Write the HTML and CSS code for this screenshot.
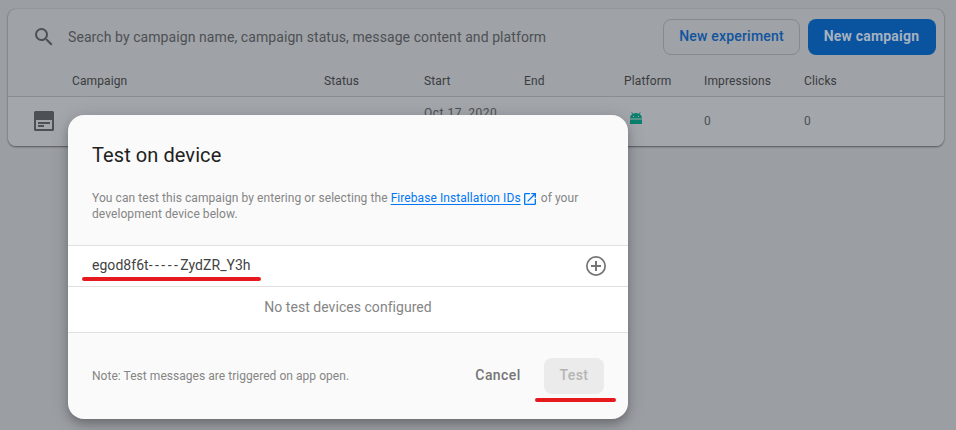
FILE: index.html
```html
<!DOCTYPE html>
<html lang="en">
<head>
<meta charset="utf-8">
<title>Test on device</title>
<link rel="stylesheet" href="styles.css">
</head>
<body>
<main class="card">
  <div class="toolbar">
    <svg class="search-icon" viewBox="0 0 24 24"><path d="M15.5 14h-.79l-.28-.27A6.47 6.47 0 0 0 16 9.5 6.5 6.5 0 1 0 9.5 16c1.61 0 3.09-.59 4.23-1.57l.27.28v.79l5 4.99L20.49 19l-4.99-5zm-6 0C7.01 14 5 11.99 5 9.5S7.01 5 9.5 5 14 7.01 14 9.5 11.99 14 9.5 14z"/></svg>
    <span class="search-text">Search by campaign name, campaign status, message content and platform</span>
    <button class="btn experiment"><span>New experiment</span></button>
    <button class="btn campaign"><span>New campaign</span></button>
  </div>
  <div class="row head">
    <span></span><span>Campaign</span><span>Status</span><span>Start</span><span>End</span><span>Platform</span><span>Impressions</span><span>Clicks</span>
  </div>
  <div class="row data">
    <svg class="message-icon" viewBox="0 0 20 20"><path fill-rule="evenodd" d="M1.5 0h17A1.5 1.5 0 0 1 20 1.500v17a1.500 1.500 0 0 1-1.500 1.500h-17A1.500 1.500 0 0 1 0 18.500v-17A1.500 1.500 0 0 1 1.500 0zM2 9v9h16V9zM4 11h12v2H4zM4 14h6v2H4z"/></svg>
    <span></span><span></span><span class="date">Oct 17, 2020</span><span></span>
    <svg class="android" viewBox="0 0 12 12"><path fill-rule="evenodd" d="M0 6.500C0 4.500 1 3 2.500 2.100L1.300.4 1.900 0l1.300 1.700a6.500 6.500 0 0 1 5.600 0L10.100 0l.6.4-1.200 1.700C11 3 12 4.500 12 6.500zM3 4v1h1V4zM8 4v1h1V4zM0 7.500h12V12H0z"/></svg>
    <span>0</span><span>0</span>
  </div>
</main>
<section class="dialog" role="dialog">
  <header class="intro">
    <h1>Test on device</h1>
    <p>You can test this campaign by entering or selecting the <a href="#">Firebase Installation IDs</a><svg class="open-icon" viewBox="0 0 18 18"><path d="M16 16H2V2h7V0H2a2 2 0 0 0-2 2v14a2 2 0 0 0 2 2h14a2 2 0 0 0 2-2V9h-2zM11 0v2h3.590l-9.830 9.830 1.410 1.410L16 3.410V7h2V0z"/></svg> of your<br>development device below.</p>
  </header>
  <div class="token-row">
    <span class="token">egod8f6t<span class="dashes">-----</span>ZydZR_Y3h<i class="mark token-mark"></i></span>
    <svg class="add-icon" viewBox="0 0 20 20"><path d="M11 5H9v4H5v2h4v4h2v-4h4V9h-4zM10 0a10 10 0 1 0 0 20 10 10 0 0 0 0-20zm0 18.300a8.300 8.300 0 1 1 0-16.600 8.300 8.300 0 0 1 0 16.600z"/></svg>
  </div>
  <div class="empty"><span>No test devices configured</span></div>
  <footer>
    <span class="note">Note: Test messages are triggered on app open.</span>
    <button class="btn cancel"><span>Cancel</span></button>
    <button class="btn test"><span>Test</span><i class="mark test-mark"></i></button>
  </footer>
</section>
</body>
</html>
```
FILE: styles.css
```css
* { box-sizing: border-box; }
body {
  margin: 0;
  height: 430px;
  padding: 9px 12px 0 8px;
  overflow: hidden;
  background: #9b9ea3;
  font-family: Roboto, "Liberation Sans", sans-serif;
  color: #4d5054;
}
svg { display: block; fill: currentColor; }
.card {
  height: 137px;
  border-radius: 8px;
  background: #9fa2a6;
  box-shadow: 0 1px 2px rgba(0, 0, 0, .45), 0 0 1px rgba(0, 0, 0, .25);
  overflow: hidden;
}
.toolbar {
  height: 56px;
  display: flex;
  align-items: center;
  padding: 0 8px 0 24px;
}
.search-icon { width: 24px; height: 24px; color: #4c4f53; }
.search-text {
  margin-left: 12px;
  flex: 1;
  font-size: 14px;
  line-height: 20px;
  letter-spacing: .08px;
  white-space: nowrap;
}
.btn {
  height: 36px;
  padding: 0 0 2px;
  border: 0;
  border-radius: 8px;
  background: none;
  font: 500 14px/34px Roboto, "Liberation Sans", sans-serif;
  white-space: nowrap;
}
.experiment { width: 137px; border: 1px solid #868a90; color: #10549f; letter-spacing: .2px; line-height: 32px; }
.campaign { width: 128px; margin-left: 8px; padding-right: 1px; background: #09539f; color: #a5b1bf; letter-spacing: .2px; font-weight: 700; }
.row {
  display: grid;
  grid-template-columns: 64px 252px 100px 100px 100px 80px 100px 100px;
  align-items: center;
  font-size: 12px;
  line-height: 16px;
}
.head { height: 32px; border-bottom: 1px solid #888b90; color: #3a3c40; letter-spacing: .12px; }
.data { height: 49px; padding-bottom: 1px; background: #a3a6aa; }
.message-icon { width: 20px; height: 20px; margin-left: 26px; }
.date { align-self: start; margin-top: 8px; letter-spacing: .5px; }
.android { width: 12px; height: 12px; margin: -6px 0 0 6px; color: #0b8170; }
.dialog {
  position: absolute;
  left: 68px;
  top: 115px;
  width: 560px;
  height: 304px;
  border-radius: 16px;
  background: #fafafa;
  color: #858585;
  box-shadow: 0 5px 8px rgba(0, 0, 0, .22), 0 3px 20px rgba(0, 0, 0, .14);
}
.intro { height: 130px; padding: 24px 24px 0; }
h1 { margin: 0; font-size: 20px; line-height: 32px; font-weight: 400; letter-spacing: .08px; color: #212121; }
p { margin: 19px 0 0; font-size: 12px; line-height: 16px; letter-spacing: .073px; white-space: nowrap; }
a { color: #0277f5; text-decoration: underline; text-underline-offset: 2px; }
.open-icon { display: inline-block; width: 12px; height: 12px; margin: 0 2px 0 3px; vertical-align: -3px; color: #0277f5; }
.token-row {
  height: 42px;
  padding: 0 22px 0 24px;
  display: flex;
  align-items: center;
  justify-content: space-between;
  background: #fff;
  border: solid #e0e0e0;
  border-width: 1px 0;
}
.token { position: relative; top: -1px; font-size: 14px; line-height: 20px; letter-spacing: .04px; color: #424242; }
.dashes { letter-spacing: 2.45px; }
.add-icon { width: 20px; height: 20px; color: #757575; }
.empty {
  height: 46px;
  padding-top: 10px;
  background: #fff;
  border-bottom: 1px solid #e0e0e0;
  text-align: center;
  font-size: 14px;
  line-height: 20px;
  letter-spacing: .04px;
}
footer { height: 86px; padding: 0 24px; display: flex; align-items: center; }
.note { flex: 1; font-size: 12px; line-height: 16px; letter-spacing: .04px; }
.cancel { width: 76px; margin-right: 8px; color: #757575; letter-spacing: .4px; }
.test { position: relative; width: 60px; background: #ebebeb; color: #b5b5b5; letter-spacing: .4px; }
.mark { position: absolute; height: 4px; border-radius: 2px; background: #e61a1e; }
.token-mark { left: -10px; top: 22px; width: 179px; }
.test-mark { left: -9px; top: 40px; width: 81px; }
```
